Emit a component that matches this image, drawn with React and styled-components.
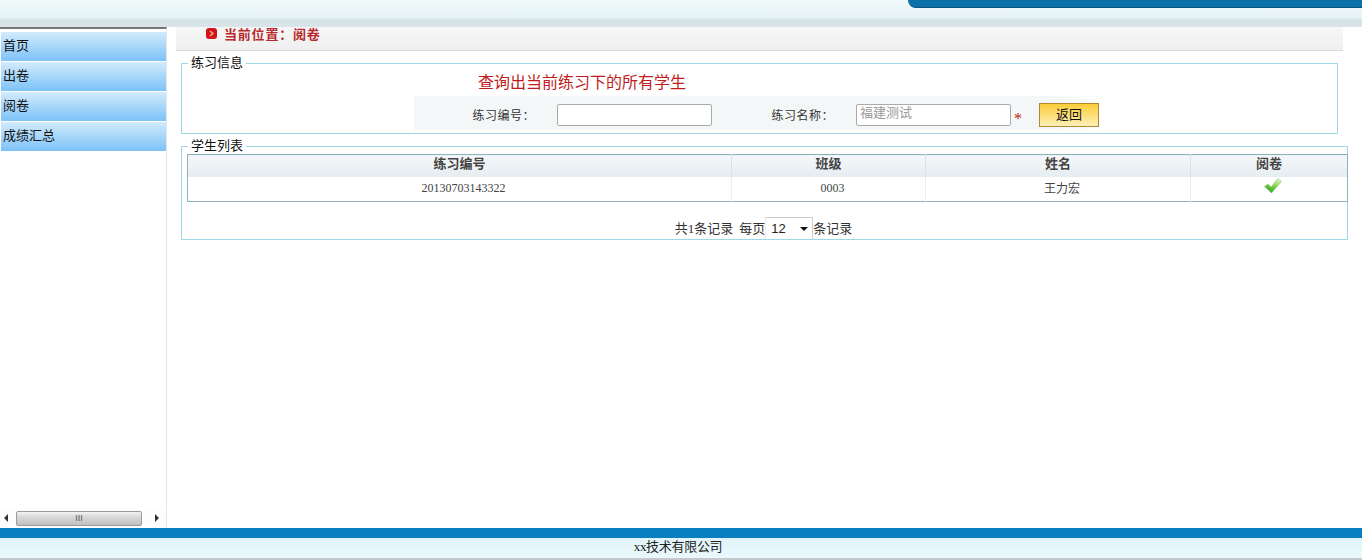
import React from "react";
import styled, { createGlobalStyle } from "styled-components";

const Global = createGlobalStyle`
  html, body { margin: 0; padding: 0; background: #fff; overflow: hidden; }
  body { font-family: "Liberation Serif", "Noto Sans CJK SC", serif; font-size: 13px; color: #333; }
  * { box-sizing: border-box; }
`;

const Page = styled.div`
  width: 1362px;
  height: 560px;
  display: flex;
  flex-direction: column;
`;

const Header = styled.header`
  height: 27px;
  flex: none;
  display: flex;
  justify-content: flex-end;
  align-items: flex-start;
  background: linear-gradient(#f0f9fa 0, #e6f3f5 18px, #d5e2e6 20px, #d9e5e9 27px);
`;

const HeaderBanner = styled.div`
  width: 454px;
  height: 8px;
  background: #0b70a8;
  border-bottom: 1px solid #07537f;
  border-bottom-left-radius: 10px;
`;

const Body = styled.div`
  flex: 1;
  display: flex;
  min-height: 0;
`;

const Sidebar = styled.nav`
  width: 167px;
  flex: none;
  border-top: 2px solid #777;
  border-right: 1px solid #e4e4e4;
  display: flex;
  flex-direction: column;
  padding-top: 3px;
`;

const NavItem = styled.a`
  display: flex;
  align-items: center;
  height: 29px;
  margin: 0 0 1px 1px;
  padding: 0 0 5px 2px;
  color: #111;
  font-size: 13px;
  background: linear-gradient(#d3ebfc, #7cc2f8);
`;

const ScrollBar = styled.div`
  margin-top: auto;
  margin-bottom: 2px;
  height: 16px;
  display: flex;
  align-items: center;
  background: #fdfdfd;
`;

const Arrow = styled.span`
  width: 0;
  height: 0;
  margin-left: ${(p) => (p.$dir === "right" ? 13 : 4)}px;
  margin-right: ${(p) => (p.$dir === "right" ? 0 : 8)}px;
  border-top: 4px solid transparent;
  border-bottom: 4px solid transparent;
  border-left: ${(p) => (p.$dir === "right" ? "4px solid #333" : "0")};
  border-right: ${(p) => (p.$dir === "left" ? "4px solid #333" : "0")};
`;

const Thumb = styled.div`
  width: 126px;
  height: 15px;
  display: flex;
  align-items: center;
  justify-content: center;
  border: 1px solid #9a9a9a;
  border-radius: 2px;
  background: linear-gradient(#f4f2f2, #d8d8d8 40%, #c0c0c0);
  color: #555;
  font: 9px/1 "Liberation Sans", sans-serif;
`;

const Main = styled.main`
  flex: 1;
  min-width: 0;
  padding-left: 9px;
`;

const Crumb = styled.div`
  width: 1167px;
  height: 24px;
  display: flex;
  align-items: center;
  gap: 7px;
  padding: 0 0 10px 30px;
  background: linear-gradient(#f7f7f7, #efefef);
  border-bottom: 1px solid #dcd8e0;
  color: #b8282d;
  font-size: 13px;
  font-weight: 700;
  letter-spacing: 0.8px;
`;

const CrumbIcon = styled.span`
  width: 11px;
  height: 11px;
  border-radius: 3px;
  background: #d3121b;
  display: flex;
  align-items: center;
  justify-content: center;
`;

const Group = styled.fieldset`
  margin: 4px 0 0 5px;
  padding: 0;
  width: ${(p) => p.$width}px;
  height: ${(p) => p.$height}px;
  border: 1px solid #9fd8e6;
  min-width: 0;
`;

const GroupTitle = styled.legend`
  margin-left: 6px;
  padding: 0 3px 2px;
  color: #111;
  font-size: 13px;
  line-height: 15px;
`;

const Notice = styled.div`
  height: 24px;
  padding-left: 296px;
  margin-top: -1px;
  color: #c01c1c;
  font-size: 16px;
  line-height: 24px;
`;

const FilterRow = styled.div`
  margin: 1px 0 0 232px;
  width: 692px;
  height: 34px;
  padding-top: 4px;
  display: flex;
  align-items: center;
  background: linear-gradient(90deg, #f4f7f7, #f4f7f7 92%, #fff);
  font-size: 12px;
  color: #333;
`;

const FilterLabel = styled.label`
  width: ${(p) => p.$width}px;
  text-align: right;
  flex: none;
  letter-spacing: 0.5px;
`;

const TextField = styled.input`
  width: 155px;
  height: 22px;
  margin-left: ${(p) => p.$gap}px;
  padding: 0 3px 7px;
  border: 1px solid #aaa;
  border-radius: 2px;
  background: #fff;
  color: #999;
  font: 13px "Noto Sans CJK SC", sans-serif;
  flex: none;
`;

const Star = styled.span`
  margin-left: 3px;
  color: #c01c1c;
  font-size: 16px;
  line-height: 1;
  padding-top: 7px;
`;

const BackButton = styled.button`
  flex: none;
  width: 60px;
  height: 24px;
  margin-left: 17px;
  padding: 0 0 3px;
  border: 1px solid #b08a30;
  background: linear-gradient(#fbcd3a, #fdf0b8);
  color: #111;
  font: 13px "Noto Sans CJK SC", sans-serif;
`;

const Grid = styled.table`
  width: 1160px;
  margin: -1px 0 0 5px;
  border-collapse: collapse;
  table-layout: fixed;
  border: 1px solid #8fb0bd;
  font-size: 12px;
`;

const HeadCell = styled.th`
  height: 22px;
  padding: 0 0 5px;
  line-height: 15px;
  background: linear-gradient(#f5f8fa, #e4edf1);
  border-right: 1px solid #dbe2e6;
  color: #444;
  font-size: 13px;
  font-weight: 700;
  &:last-child { border-right: 0; }
`;

const Cell = styled.td`
  height: 25px;
  padding: 0 0 1px 8px;
  text-align: center;
  color: #444;
  border-right: 1px solid #eee;
  &:last-child { border-right: 0; padding-bottom: 6px; }
`;

const Pager = styled.div`
  margin-top: 16px;
  padding-right: 2px;
  display: flex;
  justify-content: center;
  align-items: center;
  font-size: 13px;
  line-height: 22px;
  color: #333;
  height: 22px;
`;

const PerPage = styled.span`
  margin-left: 6px;
`;

const SizeSelect = styled.div`
  width: 48px;
  height: 22px;
  margin-bottom: 2px;
  display: flex;
  align-items: center;
  justify-content: space-between;
  padding: 0 4px 0 5px;
  border: 1px solid #ccc;
  border-bottom: 0;
  border-left-color: #eee;
  color: #222;
  font: 13px "Liberation Sans", sans-serif;
  background: #fff;
`;

const Caret = styled.span`
  width: 0;
  height: 0;
  border-left: 4px solid transparent;
  border-right: 4px solid transparent;
  border-top: 4px solid #111;
`;

const Footer = styled.footer`
  flex: none;
  height: 32px;
  border-top: 10px solid #0a7fc0;
  background: linear-gradient(#e0f4f9, #eaf8fc);
  border-bottom: 2px solid #c4c7cc;
  display: flex;
  align-items: center;
  justify-content: center;
  color: #222;
  font-size: 13px;
  letter-spacing: -0.3px;
  padding: 0 6px 5px 0;
`;

const TickSvg = styled.svg`
  display: block;
  margin: 0 auto;
`;

const ChevronIcon = () => (
  <svg width="7" height="7" viewBox="0 0 7 7" aria-hidden="true">
    <path d="M2 1l3 2.5L2 6" fill="none" stroke="#f6c0a0" strokeWidth="1.2" />
  </svg>
);

const CheckIcon = () => (
  <TickSvg width="18" height="16" viewBox="0 0 18 16" aria-hidden="true">
    <defs>
      <linearGradient id="tick" x1="0.8" y1="0" x2="0.3" y2="1">
        <stop offset="0" stopColor="#e6f5d2" />
        <stop offset="0.45" stopColor="#8ad84e" />
        <stop offset="1" stopColor="#2f9e28" />
      </linearGradient>
    </defs>
    <path d="M0.5 8.5L4 6l3 3 7-8.5 3.5 3L7.5 15z" fill="url(#tick)" stroke="#7cc060" strokeWidth="0.5" />
  </TickSvg>
);

const rows = [{ id: "20130703143322", cls: "0003", name: "王力宏" }];
const menu = ["首页", "出卷", "阅卷", "成绩汇总"];

export default function App() {
  return (
    <Page>
      <Global />
      <Header>
        <HeaderBanner />
      </Header>
      <Body>
        <Sidebar>
          {menu.map((label) => (
            <NavItem key={label}>{label}</NavItem>
          ))}
          <ScrollBar>
            <Arrow $dir="left" />
            <Thumb>III</Thumb>
            <Arrow $dir="right" />
          </ScrollBar>
        </Sidebar>
        <Main>
          <Crumb>
            <CrumbIcon>
              <ChevronIcon />
            </CrumbIcon>
            当前位置：阅卷
          </Crumb>
          <Group $width={1157} $height={79}>
            <GroupTitle>练习信息</GroupTitle>
            <Notice>查询出当前练习下的所有学生</Notice>
            <FilterRow>
              <FilterLabel $width={121}>练习编号：</FilterLabel>
              <TextField $gap={22} />
              <FilterLabel $width={122}>练习名称：</FilterLabel>
              <TextField $gap={22} readOnly value="福建测试" />
              <Star>*</Star>
              <BackButton>返回</BackButton>
            </FilterRow>
          </Group>
          <Group $width={1167} $height={102}>
            <GroupTitle>学生列表</GroupTitle>
            <Grid>
              <colgroup>
                <col width="544" />
                <col width="194" />
                <col width="265" />
                <col width="157" />
              </colgroup>
              <thead>
                <tr>
                  <HeadCell>练习编号</HeadCell>
                  <HeadCell>班级</HeadCell>
                  <HeadCell>姓名</HeadCell>
                  <HeadCell>阅卷</HeadCell>
                </tr>
              </thead>
              <tbody>
                {rows.map((r) => (
                  <tr key={r.id}>
                    <Cell>{r.id}</Cell>
                    <Cell>{r.cls}</Cell>
                    <Cell>{r.name}</Cell>
                    <Cell>
                      <CheckIcon />
                    </Cell>
                  </tr>
                ))}
              </tbody>
            </Grid>
            <Pager>
              共1条记录
              <PerPage>每页</PerPage>
              <SizeSelect>
                12
                <Caret />
              </SizeSelect>
              条记录
            </Pager>
          </Group>
        </Main>
      </Body>
      <Footer>xx技术有限公司</Footer>
    </Page>
  );
}
